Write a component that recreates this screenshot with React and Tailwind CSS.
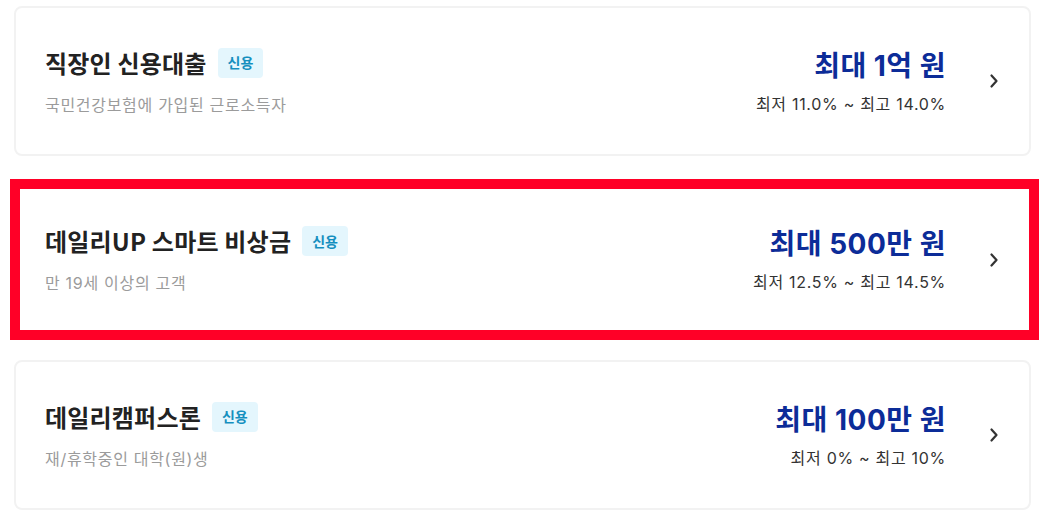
const loans = [
  {
    name: "직장인 신용대출",
    desc: "국민건강보험에 가입된 근로소득자",
    amount: "최대 1억 원",
    rate: "최저 11.0% ~ 최고 14.0%",
  },
  {
    name: "데일리UP 스마트 비상금",
    desc: "만 19세 이상의 고객",
    amount: "최대 500만 원",
    rate: "최저 12.5% ~ 최고 14.5%",
  },
  {
    name: "데일리캠퍼스론",
    desc: "재/휴학중인 대학(원)생",
    amount: "최대 100만 원",
    rate: "최저 0% ~ 최고 10%",
  },
];

const bodyFont = { fontFamily: 'Inter, "Noto Sans CJK KR", sans-serif' };

function Chevron() {
  return (
    <svg width="16" height="16" viewBox="0 0 16 16" className="ml-[40px] shrink-0">
      <path d="M5.5 2.5 L10.5 8 L5.5 13.5" fill="none" stroke="#333" strokeWidth="2.2" strokeLinecap="round" strokeLinejoin="round" />
    </svg>
  );
}

function LoanRow({ loan }) {
  return (
    <>
      <div className="flex-1 min-w-0">
        <div className="flex items-center">
          <h2 className="text-[24px] font-bold text-[#222] leading-[32px] tracking-[0.2px]">{loan.name}</h2>
          <span className="ml-[11px] px-[10px] h-[30px] flex items-center rounded-[4px] bg-[#e4f6fd] text-[#158fbf] text-[14px] font-bold">
            신용
          </span>
        </div>
        <p className="mt-[15px] text-[16px] leading-[22px] text-[#9b9b9b] tracking-[0.7px]" style={bodyFont}>
          {loan.desc}
        </p>
      </div>
      <div className="text-right">
        <p className="text-[28px] font-bold leading-[36px] text-[#0c2c98] tracking-[0.5px]" style={bodyFont}>
          {loan.amount}
        </p>
        <p className="mt-[9px] text-[16px] leading-[22px] text-[#333] tracking-[0.7px]" style={bodyFont}>
          {loan.rate}
        </p>
      </div>
      <Chevron />
    </>
  );
}

export default function App() {
  return (
    <div
      className="w-[1048px] h-[525px] bg-white pt-[6px] pl-[14px] pr-[17px] overflow-hidden"
      style={{ fontFamily: '"Noto Sans CJK KR", "Noto Sans", sans-serif' }}
    >
      <div className="h-[150px] rounded-[8px] border-2 border-[#f2f2f2] flex items-center pl-[29px] pr-[27px]">
        <LoanRow loan={loans[0]} />
      </div>
      <div className="mt-[23px] ml-[-4px] mr-[-8px] h-[161px] border-[10px] border-[#ff0027] flex items-center pl-[25px] pr-[27px]">
        <LoanRow loan={loans[1]} />
      </div>
      <div className="mt-[20px] h-[150px] rounded-[8px] border-2 border-[#f2f2f2] flex items-center pl-[29px] pr-[27px]">
        <LoanRow loan={loans[2]} />
      </div>
    </div>
  );
}
